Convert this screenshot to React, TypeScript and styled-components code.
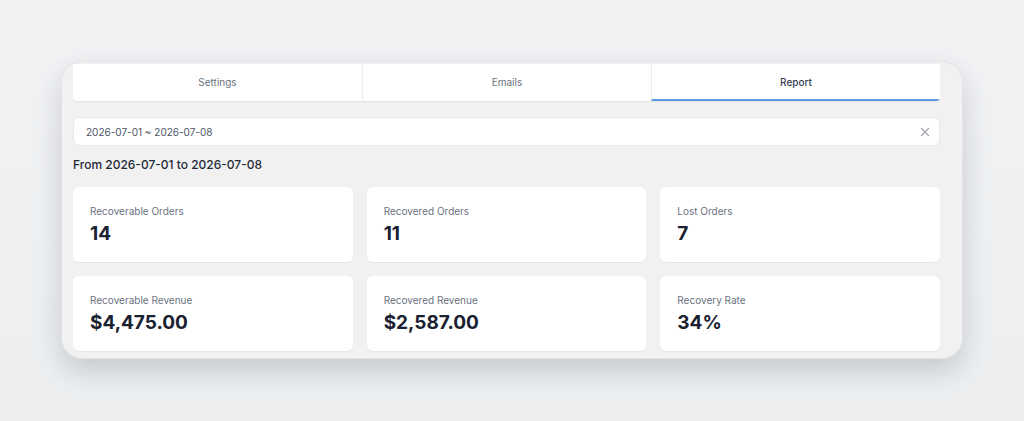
import { useState } from 'react';
import styled, { createGlobalStyle } from 'styled-components';

const GlobalStyle = createGlobalStyle`
  html, body {
    margin: 0;
    padding: 0;
    background: #eef0f2;
    font-family: Inter, "Noto Sans", sans-serif;
  }
`;

const Page = styled.div`
  width: 1024px;
  height: 421px;
  padding: 62px 0 0 62px;
  box-sizing: border-box;
  background: linear-gradient(180deg, #f2f3f5 0%, #eceef0 100%);
`;

const Panel = styled.div`
  width: 900px;
  box-sizing: border-box;
  padding: 2px 22px 7px 11px;
  background: #f1f1f1;
  border-radius: 20px;
  box-shadow: 0 0 0 1px #e3e4e6, 0 12px 28px rgba(110, 116, 126, 0.32);
  display: flex;
  flex-direction: column;
`;

const Tabs = styled.div`
  display: grid;
  grid-template-columns: repeat(3, 1fr);
  height: 37px;
  flex-shrink: 0;
  background: #fff;
  border-radius: 0 0 4px 4px;
  box-shadow: 0 1px 1px rgba(0, 0, 0, 0.06);
  overflow: hidden;
`;

const Tab = styled.button<{ $active?: boolean }>`
  border: none;
  background: #fff;
  font-family: inherit;
  font-size: 10px;
  color: ${p => (p.$active ? '#374151' : '#6b7280')};
  font-weight: ${p => (p.$active ? 500 : 400)};
  border-left: 1px solid #ececec;
  border-bottom: 2px solid ${p => (p.$active ? '#5b9be6' : 'transparent')};
  padding: 0;
  cursor: pointer;

  &:first-child {
    border-left: none;
  }
`;

const Field = styled.div`
  margin-top: 16px;
  height: 29px;
  flex-shrink: 0;
  background: #fff;
  border: 1px solid #e6e7e9;
  border-radius: 6px;
  box-sizing: border-box;
  display: flex;
  align-items: center;
  justify-content: space-between;
  padding: 0 9px 0 12px;
  font-size: 10px;
  color: #4b5563;
`;

const Clear = styled.span`
  display: flex;
  color: #a0a4ab;
`;

const Heading = styled.h2`
  margin: 11px 0 0;
  font-size: 12px;
  line-height: 16px;
  font-weight: 500;
  color: #1f2937;
`;

const Grid = styled.div`
  margin-top: 14px;
  display: grid;
  grid-template-columns: repeat(3, 1fr);
  grid-auto-rows: 75px;
  gap: 14px;
`;

const Card = styled.div`
  background: #fff;
  border-radius: 6px;
  box-shadow: 0 1px 1px rgba(0, 0, 0, 0.05);
  padding: 18px 17px 0;
  display: flex;
  flex-direction: column;
  gap: 5px;
`;

const Label = styled.div`
  font-size: 10px;
  line-height: 12px;
  color: #6b7280;
`;

const Value = styled.div`
  font-size: 19px;
  line-height: 24px;
  font-weight: 700;
  color: #1a2130;
`;

const stats = [
  { label: 'Recoverable Orders', value: '14' },
  { label: 'Recovered Orders', value: '11' },
  { label: 'Lost Orders', value: '7' },
  { label: 'Recoverable Revenue', value: '$4,475.00' },
  { label: 'Recovered Revenue', value: '$2,587.00' },
  { label: 'Recovery Rate', value: '34%' },
];

export default function App() {
  const [tab, setTab] = useState('Report');

  return (
    <>
      <GlobalStyle />
      <Page>
        <Panel>
          <Tabs>
            {['Settings', 'Emails', 'Report'].map(t => (
              <Tab key={t} $active={tab === t} onClick={() => setTab(t)}>
                {t}
              </Tab>
            ))}
          </Tabs>

          <Field>
            <span>2026-07-01 ~ 2026-07-08</span>
            <Clear>
              <svg width="10" height="10" viewBox="0 0 10 10" fill="none" stroke="currentColor" strokeWidth="1.1">
                <path d="M1 1 L9 9 M9 1 L1 9" />
              </svg>
            </Clear>
          </Field>

          <Heading>From 2026-07-01 to 2026-07-08</Heading>

          <Grid>
            {stats.map(s => (
              <Card key={s.label}>
                <Label>{s.label}</Label>
                <Value>{s.value}</Value>
              </Card>
            ))}
          </Grid>
        </Panel>
      </Page>
    </>
  );
}
